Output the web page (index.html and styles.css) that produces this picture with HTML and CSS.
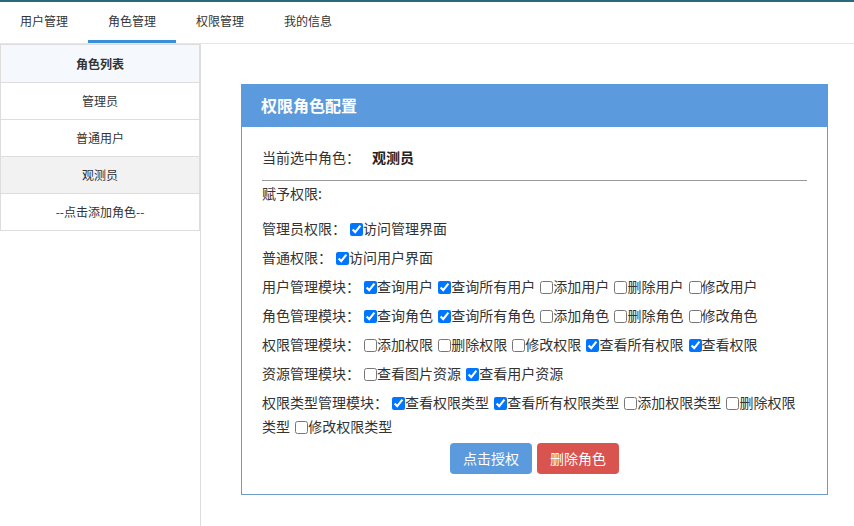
FILE: index.html
```html
<!DOCTYPE html>
<html lang="zh-CN">
<head>
<meta charset="utf-8">
<title>角色管理</title>
<link rel="stylesheet" href="styles.css">
</head>
<body>
<div class="topline"></div>
<nav class="tabs">
  <a class="tab">用户管理</a>
  <a class="tab active">角色管理</a>
  <a class="tab">权限管理</a>
  <a class="tab">我的信息</a>
</nav>
<div class="layout">
  <aside class="sidebar">
    <ul class="role-list">
      <li class="head">角色列表</li>
      <li>管理员</li>
      <li>普通用户</li>
      <li class="selected">观测员</li>
      <li>--点击添加角色--</li>
    </ul>
  </aside>
  <main class="main">
    <section class="panel">
      <div class="panel-head">权限角色配置</div>
      <div class="panel-body">
        <div class="current">当前选中角色<span class="colon">：</span><b>观测员</b></div>
        <hr class="sep">
        <div class="grant">赋予权限:</div>
        <div class="perms">
          <div class="row">管理员权限<span class="colon">：</span><label><input type="checkbox" checked>访问管理界面</label></div>
          <div class="row">普通权限<span class="colon">：</span><label><input type="checkbox" checked>访问用户界面</label></div>
          <div class="row">用户管理模块<span class="colon">：</span><label><input type="checkbox" checked>查询用户</label> <label><input type="checkbox" checked>查询所有用户</label> <label><input type="checkbox">添加用户</label> <label><input type="checkbox">删除用户</label> <label><input type="checkbox">修改用户</label></div>
          <div class="row">角色管理模块<span class="colon">：</span><label><input type="checkbox" checked>查询角色</label> <label><input type="checkbox" checked>查询所有角色</label> <label><input type="checkbox">添加角色</label> <label><input type="checkbox">删除角色</label> <label><input type="checkbox">修改角色</label></div>
          <div class="row">权限管理模块<span class="colon">：</span><label><input type="checkbox">添加权限</label> <label><input type="checkbox">删除权限</label> <label><input type="checkbox">修改权限</label> <label><input type="checkbox" checked>查看所有权限</label> <label><input type="checkbox" checked>查看权限</label></div>
          <div class="row">资源管理模块<span class="colon">：</span><label><input type="checkbox">查看图片资源</label> <label><input type="checkbox" checked>查看用户资源</label></div>
          <div class="row">权限类型管理模块<span class="colon">：</span><label><input type="checkbox" checked>查看权限类型</label> <label><input type="checkbox" checked>查看所有权限类型</label> <label><input type="checkbox">添加权限类型</label> <label><input type="checkbox">删除权限类型</label> <label><input type="checkbox">修改权限类型</label></div>
        </div>
        <div class="actions">
          <button class="btn btn-primary">点击授权</button>
          <button class="btn btn-danger">删除角色</button>
        </div>
      </div>
    </section>
  </main>
</div>
</body>
</html>
```
FILE: styles.css
```css
* { box-sizing: border-box; }
html, body { margin: 0; padding: 0; height: 100%; }
body {
  font-family: "Noto Sans CJK SC", "Microsoft YaHei", sans-serif;
  color: #333;
  background: #fff;
  display: flex;
  flex-direction: column;
  overflow: hidden;
}
.topline { height: 2px; background: #2b6a78; flex: none; }
.tabs {
  display: flex;
  height: 42px;
  border-bottom: 1px solid #e6e6e6;
  flex: none;
}
.tab {
  width: 88px;
  text-align: center;
  font-size: 12px;
  line-height: 38px;
  color: #333;
  border-bottom: 3px solid transparent;
}
.tab.active { border-bottom-color: #3a8fd6; }
.layout { flex: 1; display: flex; min-height: 0; }
.sidebar {
  width: 201px;
  border-right: 1px solid #ddd;
  flex: none;
}
.role-list {
  list-style: none;
  margin: 0;
  padding: 0;
  border: 1px solid #ddd;
  border-top: none;
  font-size: 12px;
}
.role-list li {
  height: 37px;
  line-height: 36px;
  text-align: center;
  border-top: 1px solid #ddd;
}
.role-list li.head {
  height: 38px;
  line-height: 37px;
  font-weight: bold;
  background: #f5f9fd;
}
.role-list li.selected { background: #f2f2f2; }
.main { flex: 1; padding: 40px 0 0 40px; }
.panel {
  width: 587px;
  border: 1px solid #6f9bcb;
}
.panel-head {
  height: 43px;
  line-height: 43px;
  background: #5b9bdd;
  color: #fff;
  font-size: 16px;
  font-weight: bold;
  padding-left: 20px;
  margin: -1px -1px 0 -1px;
}
.panel-body { padding: 18px 20px 20px 20px; font-size: 14px; }
.colon { font-family: "Noto Sans CJK TC", sans-serif; }
.current { line-height: 24px; }
.current b { font-weight: bold; color: #222; margin-left: 12px; }
.sep { margin: 11px 0 0 0; border: 0; border-top: 1px solid #999; height: 0; }
.grant { line-height: 24px; }
.perms { margin-top: 11px; }
.row { line-height: 24px; margin-bottom: 5px; word-spacing: -2px; }
.row:last-child { margin-bottom: 0; }
.row input { width: 13px; height: 13px; margin: 0 0 0 4px; vertical-align: -2px; }
.actions {
  display: flex;
  justify-content: center;
  gap: 5px;
  margin-top: 5px;
}
.btn {
  height: 31px;
  padding: 0 13px;
  border: none;
  border-radius: 4px;
  color: #fff;
  font-family: inherit;
  font-size: 14px;
  line-height: 31px;
}
.btn-primary { background: #5b9bdd; }
.btn-danger { background: #d9534f; }
```
